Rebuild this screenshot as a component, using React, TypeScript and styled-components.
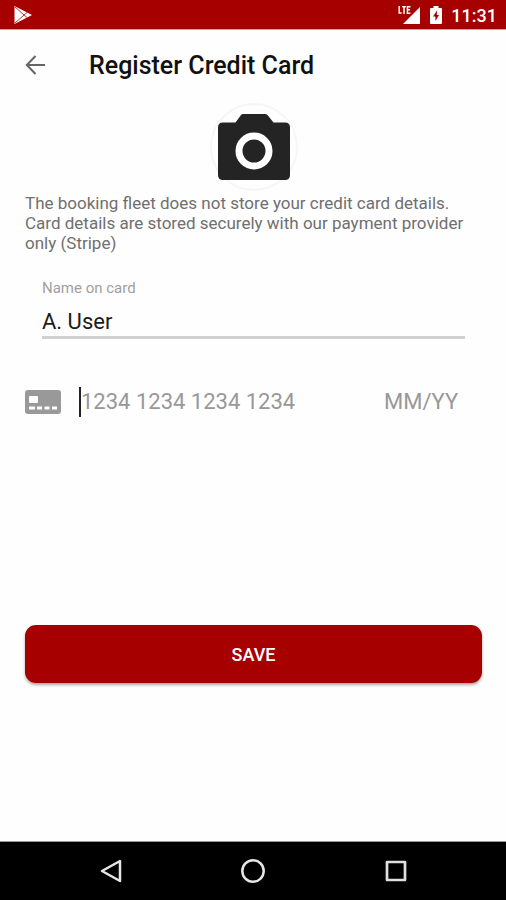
import React, { useState } from "react";
import styled, { createGlobalStyle } from "styled-components";

const GlobalStyle = createGlobalStyle`
  *, *::before, *::after { box-sizing: border-box; }
  body {
    margin: 0;
    background: #fefefe;
    color: #1c1c1c;
    font-family: Roboto, "Liberation Sans", sans-serif;
  }
  button, input { font: inherit; }
`;

const Screen = styled.div`
  display: flex;
  flex-direction: column;
  min-height: 100vh;
`;

const StatusBar = styled.div`
  display: flex;
  align-items: center;
  justify-content: space-between;
  height: 30px;
  padding: 0 9px 0 13px;
  background: #a60000;
  border-bottom: 1px solid #d99;
  color: #fff;
`;

const StatusIcons = styled.div`
  display: flex;
  align-items: center;
  gap: 9px;
`;

const Clock = styled.time`
  font-size: 18px;
  font-weight: 500;
  line-height: 24px;
  padding-top: 2px;
`;

const Header = styled.header`
  display: flex;
  align-items: center;
  gap: 41px;
  height: 72px;
  padding: 0 24px;
`;

const IconButton = styled.button`
  display: flex;
  align-items: center;
  justify-content: center;
  padding: 0;
  border: 0;
  background: none;
  cursor: pointer;
`;

const Title = styled.h1`
  margin: 0;
  color: #111;
  font-size: 25px;
  font-weight: 500;
  line-height: 32px;
`;

const Form = styled.form`
  display: flex;
  flex: 1;
  flex-direction: column;
  padding: 1px 24px 24px 25px;
`;

const PhotoButton = styled(IconButton)`
  align-self: center;
  width: 88px;
  height: 88px;
  border: 2px solid #f6f6f6;
  border-radius: 50%;
`;

const Notice = styled.p`
  margin: 2px 0 0;
  color: #6f6f6f;
  font-size: 17px;
  line-height: 20px;
`;

const NameField = styled.div`
  display: flex;
  flex-direction: column;
  margin: 25px 17px 0;
`;

const Label = styled.label`
  color: #a0a0a0;
  font-size: 15px;
  line-height: 20px;
`;

const TextInput = styled.input`
  width: 100%;
  min-width: 0;
  padding: 0;
  border: 0;
  outline: 0;
  background: none;
  color: #1c1c1c;
  font-size: 22px;
  line-height: 30px;
  &::placeholder { color: #989898; opacity: 1; }
`;

const NameInput = styled(TextInput)`
  height: 41px;
  padding-top: 8px;
  border-bottom: 3px solid #d0d0d0;
`;

const CardRow = styled.div`
  display: flex;
  align-items: center;
  margin-top: 48px;
`;

const NumberSlot = styled.div`
  flex: 1;
  min-width: 0;
  margin-left: 18px;
  border-left: 2px solid #222;
`;

const ExpirySlot = styled.div`
  width: 98px;
`;

const SaveButton = styled.button`
  height: 58px;
  margin-top: 208px;
  border: 0;
  border-radius: 11px;
  background: #a60000;
  box-shadow: 0 2px 3px rgba(60, 30, 20, 0.4);
  color: #fff;
  font-size: 18px;
  font-weight: 500;
  cursor: pointer;
`;

const SystemNav = styled.nav`
  display: flex;
  align-items: center;
  justify-content: space-between;
  height: 59px;
  padding: 0 96px;
  border-top: 1px solid #999;
  background: #000;
`;

const PlayIcon = () => (
  <svg width="20" height="20" viewBox="0 0 20 20" aria-hidden="true">
    <path d="M1.5 1 19 10 1.5 19Z" fill="#fff" />
    <path d="M2 2 14.5 13M2 18 14.5 7" stroke="#a60000" strokeWidth="0.8" />
  </svg>
);

const SignalIcon = () => (
  <svg width="23" height="20" viewBox="0 0 23 20" aria-hidden="true">
    <path d="M22 2v17H5Z" fill="#fff" />
    <path
      d="M1.2 1v7h2.5M4.2 1.7h3.6M6 1.7V9M12.5 1.7H9.4v6.6h3M9.4 4.8h2.5"
      fill="none"
      stroke="#fff"
      strokeWidth="1.5"
    />
  </svg>
);

const BatteryIcon = () => (
  <svg width="12" height="20" viewBox="0 0 12 20" aria-hidden="true">
    <path d="M3.5 1h5v2H11q1 0 1 1v14q0 1-1 1H1q-1 0-1-1V4q0-1 1-1h2.500Z" fill="#fff" />
    <path d="M7 5.500 3 11.500h2.400V16L9 10H6.800Z" fill="#a60000" />
  </svg>
);

const BackIcon = () => (
  <svg width="24" height="24" viewBox="0 0 24 24" fill="none" stroke="#666" strokeWidth="2" aria-hidden="true">
    <path d="M21 11H3M11.500 2 2.800 11l8.700 9" />
  </svg>
);

const CameraIcon = () => (
  <svg width="72" height="66" viewBox="0 0 72 66" aria-hidden="true">
    <path
      d="M25 0h22q1.500 0 2.500 1l6 7.500H67q5 0 5 5V61q0 5-5 5H5q-5 0-5-5V13.500q0-5 5-5h12.500L23 1q.8-1 2-1Z"
      fill="#242424"
    />
    <circle cx="36" cy="37" r="15" fill="none" stroke="#fff" strokeWidth="7" />
  </svg>
);

const CardIcon = () => (
  <svg width="36" height="24" viewBox="0 0 36 24" aria-hidden="true">
    <rect width="36" height="24" rx="3" fill="#999" />
    <rect x="4" y="6" width="9" height="7" rx="1" fill="#fff" />
    <path d="M4 18h6M12 18h5M19.500 18h5M27 18h5" stroke="#fff" strokeWidth="3" />
  </svg>
);

const NavBackIcon = () => (
  <svg width="28" height="28" viewBox="0 0 28 28" fill="none" stroke="#e6e6e6" strokeWidth="2.500" strokeLinejoin="round" aria-hidden="true">
    <path d="M24 4v20L6 14Z" />
  </svg>
);

const NavHomeIcon = () => (
  <svg width="28" height="28" viewBox="0 0 28 28" fill="none" stroke="#e6e6e6" strokeWidth="2.500" aria-hidden="true">
    <circle cx="14" cy="14" r="10.700" />
  </svg>
);

const NavRecentIcon = () => (
  <svg width="28" height="28" viewBox="0 0 28 28" fill="none" stroke="#e0e0e0" strokeWidth="2.700" strokeLinejoin="round" aria-hidden="true">
    <rect x="5" y="5" width="18" height="18" />
  </svg>
);

export default function App() {
  const [name, setName] = useState("A. User");
  const [number, setNumber] = useState("");
  const [expiry, setExpiry] = useState("");

  return (
    <>
      <GlobalStyle />
      <Screen>
        <StatusBar>
          <PlayIcon />
          <StatusIcons>
            <SignalIcon />
            <BatteryIcon />
            <Clock>11:31</Clock>
          </StatusIcons>
        </StatusBar>
        <Header>
          <IconButton type="button" aria-label="Back">
            <BackIcon />
          </IconButton>
          <Title>Register Credit Card</Title>
        </Header>
        <Form onSubmit={(event) => event.preventDefault()}>
          <PhotoButton type="button" aria-label="Scan card">
            <CameraIcon />
          </PhotoButton>
          <Notice>
            The booking fleet does not store your credit card details. Card details are stored
            securely with our payment provider only (Stripe)
          </Notice>
          <NameField>
            <Label htmlFor="card-name">Name on card</Label>
            <NameInput id="card-name" value={name} onChange={(event) => setName(event.target.value)} />
          </NameField>
          <CardRow>
            <CardIcon />
            <NumberSlot>
              <TextInput
                aria-label="Card number"
                inputMode="numeric"
                placeholder="1234 1234 1234 1234"
                value={number}
                onChange={(event) => setNumber(event.target.value)}
              />
            </NumberSlot>
            <ExpirySlot>
              <TextInput
                aria-label="Expiry date"
                inputMode="numeric"
                placeholder="MM/YY"
                value={expiry}
                onChange={(event) => setExpiry(event.target.value)}
              />
            </ExpirySlot>
          </CardRow>
          <SaveButton type="submit">SAVE</SaveButton>
        </Form>
        <SystemNav aria-label="System">
          <IconButton type="button" aria-label="System back">
            <NavBackIcon />
          </IconButton>
          <IconButton type="button" aria-label="Home">
            <NavHomeIcon />
          </IconButton>
          <IconButton type="button" aria-label="Recent apps">
            <NavRecentIcon />
          </IconButton>
        </SystemNav>
      </Screen>
    </>
  );
}
